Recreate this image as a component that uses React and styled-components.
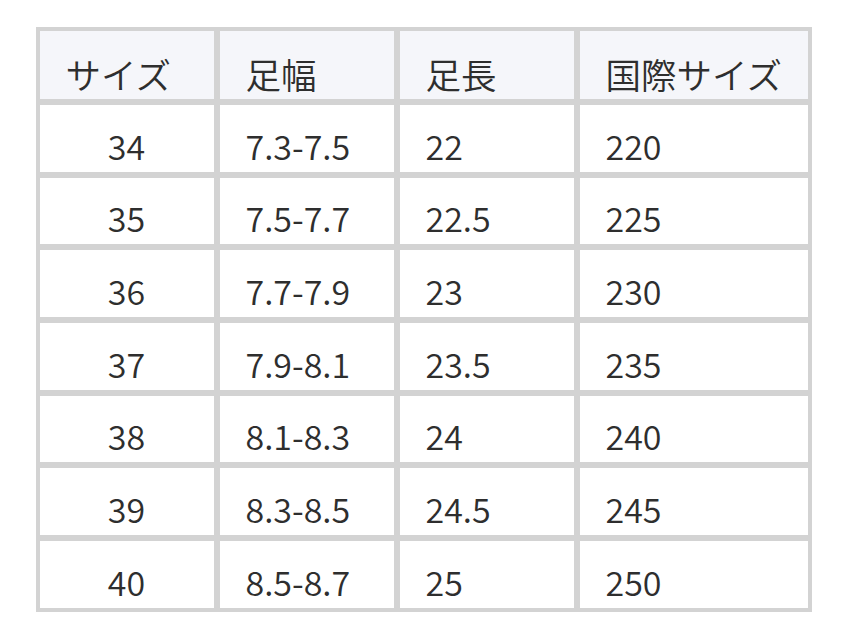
import styled, { createGlobalStyle } from "styled-components";

const GlobalStyle = createGlobalStyle`
  html, body {
    margin: 0;
    padding: 0;
    background: #fff;
  }
  body {
    font-family: "Noto Sans CJK JP", "Noto Sans", sans-serif;
    color: #333;
  }
`;

const Page = styled.div`
  padding-top: 27px;
`;

const SizeTable = styled.table`
  width: 776px;
  margin: 0 auto;
  border: 1px solid #d3d3d3;
  border-collapse: separate;
  border-spacing: 0;
  table-layout: fixed;
`;

const Col = styled.col`
  width: ${(p) => p.$w || "auto"};
`;

const HeadCell = styled.th`
  height: 74px;
  box-sizing: border-box;
  border: 3px solid #d3d3d3;
  background: #f5f6fa;
  padding: 0 0 0 26px;
  text-align: left;
  vertical-align: bottom;
  font-weight: 350;
  font-size: 35.5px;
  line-height: 50px;
  color: #2e2e2e;
  white-space: nowrap;
`;

const Cell = styled.td`
  height: 72.7px;
  box-sizing: border-box;
  border: 3px solid #d3d3d3;
  padding: 0 0 2px ${(p) => (p.$center ? "0" : "26px")};
  text-align: ${(p) => (p.$center ? "center" : "left")};
  vertical-align: bottom;
  font-weight: 350;
  font-size: 34px;
  line-height: 48px;
  color: #2e2e2e;
`;

const headers = ["サイズ", "足幅", "足長", "国際サイズ"];

const rows = [
  ["34", "7.3-7.5", "22", "220"],
  ["35", "7.5-7.7", "22.5", "225"],
  ["36", "7.7-7.9", "23", "230"],
  ["37", "7.9-8.1", "23.5", "235"],
  ["38", "8.1-8.3", "24", "240"],
  ["39", "8.3-8.5", "24.5", "245"],
  ["40", "8.5-8.7", "25", "250"],
];

export default function App() {
  return (
    <>
      <GlobalStyle />
      <Page>
        <SizeTable>
          <colgroup>
            <Col $w="180px" />
            <Col $w="180px" />
            <Col $w="180px" />
            <Col />
          </colgroup>
          <thead>
            <tr>
              {headers.map((h) => (
                <HeadCell key={h}>{h}</HeadCell>
              ))}
            </tr>
          </thead>
          <tbody>
            {rows.map((r) => (
              <tr key={r[0]}>
                {r.map((v, i) => (
                  <Cell key={i} $center={i === 0}>
                    {v}
                  </Cell>
                ))}
              </tr>
            ))}
          </tbody>
        </SizeTable>
      </Page>
    </>
  );
}
